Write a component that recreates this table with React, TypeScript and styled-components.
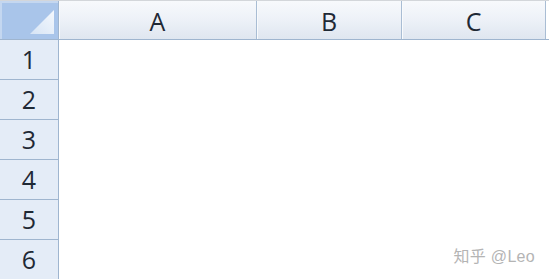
import React from 'react';
import styled, { createGlobalStyle } from 'styled-components';

const GlobalStyle = createGlobalStyle`
  html, body {
    margin: 0;
    padding: 0;
    background: #ffffff;
  }
  body {
    font-family: "Open Sans", "Noto Sans", sans-serif;
  }
`;

const columns = ['A', 'B', 'C'];
const rows = [1, 2, 3, 4, 5, 6];

export default function App() {
  return (
    <>
      <GlobalStyle />
      <Sheet>
        <HeaderRow>
          <Corner>
            <svg width="58" height="37" viewBox="0 0 58 37">
              <defs>
                <linearGradient id="tri" x1="0" y1="1" x2="1" y2="0">
                  <stop offset="0" stopColor="#d6e4f5" />
                  <stop offset="1" stopColor="#f4f8fd" />
                </linearGradient>
              </defs>
              <polygon points="30,33 54,33 54,9" fill="url(#tri)" />
            </svg>
          </Corner>
          {columns.map((c, i) => (
            <ColHead key={c} $width={i === 0 ? 198 : i === 1 ? 145 : 144}>
              {c}
            </ColHead>
          ))}
          <Tail />
        </HeaderRow>
        <Body>
          {rows.map((r) => (
            <Row key={r}>
              <RowHead>{r}</RowHead>
            </Row>
          ))}
        </Body>
        <Watermark>知乎 @Leo</Watermark>
      </Sheet>
    </>
  );
}

const Sheet = styled.div`
  position: relative;
  width: 549px;
  height: 279px;
  overflow: hidden;
  background: #ffffff;
`;

const HeaderRow = styled.div`
  display: flex;
  height: 38px;
  border-top: 1px solid #d3d6da;
  border-bottom: 1px solid #9fb5cf;
`;

const Corner = styled.div`
  width: 58px;
  flex: none;
  background: #a9c5ea;
  border-right: 1px solid #9fb5cf;
  box-shadow: inset 2px 2px 0 #c4d7f0;
  display: flex;
  svg {
    display: block;
  }
`;

const ColHead = styled.div<{ $width: number }>`
  width: ${(p) => p.$width}px;
  flex: none;
  box-sizing: border-box;
  border-right: 1px solid #a9bdd4;
  box-shadow: inset 1px 0 0 #f8fafc;
  background: linear-gradient(#f7f9fc 0%, #eef2f8 45%, #dfe6f0 100%);
  display: flex;
  align-items: center;
  justify-content: center;
  font-size: 25px;
  color: #1f2935;
  padding-top: 1px;
`;

const Tail = styled.div`
  flex: 1;
  background: #ffffff;
`;

const Body = styled.div`
  display: flex;
  flex-direction: column;
`;

const Row = styled.div`
  display: flex;
  height: 40px;
`;

const RowHead = styled.div`
  width: 58px;
  background: #e4ecf7;
  border-right: 1px solid #9fb5cf;
  border-bottom: 1px solid #9fb5cf;
  height: 39px;
  display: flex;
  align-items: center;
  justify-content: center;
  padding-bottom: 2px;
  box-sizing: border-box;
  height: 40px;
  width: 59px;
  font-size: 25px;
  color: #1f2935;
`;

const Watermark = styled.div`
  position: absolute;
  right: 14px;
  bottom: 12px;
  font-family: "Liberation Sans", "Noto Sans CJK SC", sans-serif;
  font-size: 16px;
  color: #b4b4b4;
  letter-spacing: 0.3px;
`;
